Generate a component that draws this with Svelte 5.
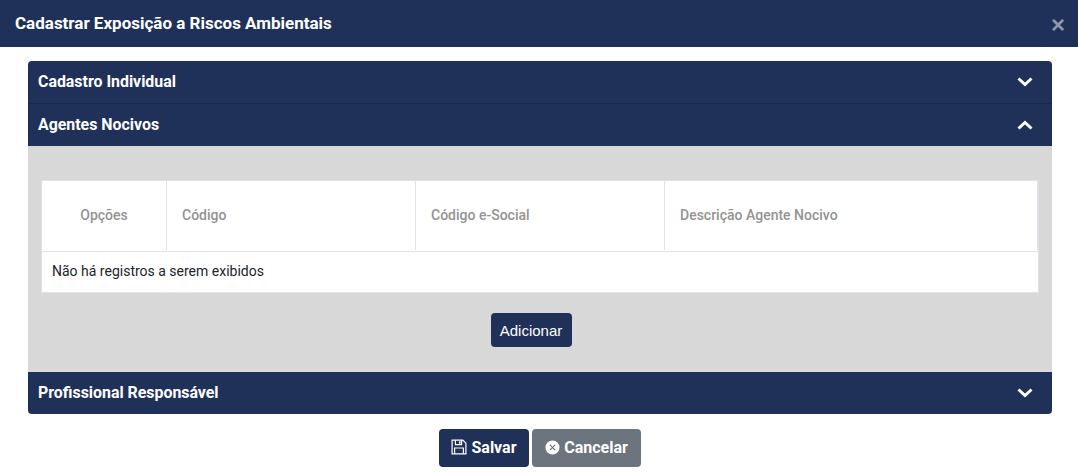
<script lang="ts">
	const columns = [
		{ label: 'Opções', cls: 'col-options' },
		{ label: 'Código', cls: 'col-code' },
		{ label: 'Código e-Social', cls: 'col-esocial' },
		{ label: 'Descrição Agente Nocivo', cls: 'col-desc' }
	];
</script>

{#snippet chevron(up: boolean)}
	<svg class="chevron" viewBox="0 0 16 10" width="16" height="10" aria-hidden="true">
		<path d={up ? 'M1.5 8.5 L8 2.5 L14.5 8.5' : 'M1.5 1.5 L8 7.5 L14.5 1.5'} fill="none" stroke="#fff" stroke-width="3" />
	</svg>
{/snippet}

<div class="modal">
	<header class="modal-header">
		<h1>Cadastrar Exposição a Riscos Ambientais</h1>
		<span class="close">×</span>
	</header>

	<div class="modal-body">
		<div class="accordion">
			<div class="acc-head first">
				<span>Cadastro Individual</span>
				{@render chevron(false)}
			</div>
			<div class="acc-head">
				<span>Agentes Nocivos</span>
				{@render chevron(true)}
			</div>
			<div class="acc-body">
				<div class="table">
					<div class="thead">
						{#each columns as col}
							<div class="th {col.cls}">{col.label}</div>
						{/each}
					</div>
					<div class="empty">Não há registros a serem exibidos</div>
				</div>
				<button class="btn add">Adicionar</button>
			</div>
			<div class="acc-head last">
				<span>Profissional Responsável</span>
				{@render chevron(false)}
			</div>
		</div>
	</div>

	<footer class="modal-footer">
		<button class="btn save">
			<svg viewBox="0 0 16 16" width="16" height="16" aria-hidden="true">
				<path fill="none" stroke="#fff" stroke-width="1.2" d="M1.1 1.1 H11.8 L14.9 4.2 V14.9 H1.1 Z" />
				<path fill="none" stroke="#fff" stroke-width="1.2" d="M4.4 1.1 V5.6 H10.6 V1.1 M3.6 14.9 V9 H12.4 V14.9" />
				<path fill="#fff" d="M8 2.2 H9.6 V4.8 H8 Z" />
			</svg>
			Salvar
		</button>
		<button class="btn cancel">
			<svg viewBox="0 0 16 16" width="15" height="15" aria-hidden="true">
				<circle cx="8" cy="8" r="7.5" fill="#fff" />
				<path d="M5.2 5.2 L10.8 10.8 M10.8 5.2 L5.2 10.8" stroke="#6c757d" stroke-width="1.2" fill="none" />
			</svg>
			Cancelar
		</button>
	</footer>
</div>

<style>
	:global(body) {
		margin: 0;
		background: #fff;
		font-family: Roboto, 'Liberation Sans', sans-serif;
	}

	.modal {
		width: 1078px;
		height: 474px;
		overflow: hidden;
	}

	.modal-header {
		height: 47px;
		background: #1f3158;
		display: flex;
		align-items: center;
		justify-content: space-between;
		padding: 0 13px 0 15px;
		box-sizing: border-box;
	}

	.modal-header h1 {
		margin: 0;
		color: #fff;
		font-size: 17px;
		font-weight: 700;
		line-height: 1;
	}

	.close {
		color: #8f98ab;
		font-family: 'Liberation Sans', sans-serif;
		font-size: 24px;
		font-weight: 700;
		line-height: 1;
		position: relative;
		top: 1px;
	}

	.modal-body {
		padding: 14px 26px 0 28px;
	}

	.accordion {
		display: flex;
		flex-direction: column;
	}

	.acc-head {
		height: 42px;
		background: #1f3158;
		color: #fff;
		display: flex;
		align-items: center;
		justify-content: space-between;
		padding: 0 19px 0 10px;
		font-size: 15.9px;
		font-weight: 700;
		box-sizing: content-box;
	}

	.acc-head span {
		padding-bottom: 2px;
	}

	.acc-head.first {
		border-radius: 4px 4px 0 0;
		border-bottom: 1px solid #1b2a4b;
	}

	.acc-head.last {
		border-radius: 0 0 4px 4px;
	}

	.acc-body {
		background: #d8d8d8;
		height: 226px;
		padding: 34px 13px 0;
		box-sizing: border-box;
		display: flex;
		flex-direction: column;
		align-items: center;
	}

	.table {
		width: 998px;
		height: 113px;
		background: #fff;
		box-sizing: border-box;
		border: 1px solid #dee2e6;
		border-bottom-color: #e4e4e4;
		flex: none;
	}

	.thead {
		display: flex;
		height: 69px;
		padding-bottom: 1px;
		border-bottom: 1px solid #dee2e6;
		box-sizing: content-box;
	}

	.th {
		display: flex;
		align-items: center;
		padding-left: 15px;
		padding-bottom: 2px;
		box-sizing: border-box;
		border-right: 1px solid #dee2e6;
		color: #939393;
		font-size: 14px;
		font-weight: 500;
	}

	.col-options {
		width: 125px;
		padding-left: 0;
		justify-content: center;
	}

	.col-code {
		width: 249px;
	}

	.col-esocial {
		width: 249px;
	}

	.col-desc {
		flex: 1;
	}

	.empty {
		height: 40px;
		display: flex;
		align-items: center;
		padding: 0 0 2px 10px;
		box-sizing: border-box;
		font-size: 14px;
		color: #212529;
	}

	.btn {
		border: 0;
		border-radius: 4px;
		font-family: inherit;
		color: #fff;
		background: #1f3158;
		display: inline-flex;
		align-items: center;
		justify-content: center;
		padding: 0;
	}

	.add {
		margin: 20px 18px 0 0;
		width: 81px;
		height: 34px;
		font-family: 'Liberation Sans', sans-serif;
		font-size: 15px;
		flex: none;
	}

	.modal-footer {
		display: flex;
		justify-content: center;
		gap: 3px;
		margin-top: 15px;
		padding-left: 2px;
	}

	.save,
	.cancel {
		height: 38px;
		font-size: 16px;
		font-weight: 700;
		gap: 4px;
		padding-bottom: 2px;
	}

	.save {
		width: 90px;
	}

	.cancel {
		width: 109px;
		background: #6c757d;
	}
</style>
